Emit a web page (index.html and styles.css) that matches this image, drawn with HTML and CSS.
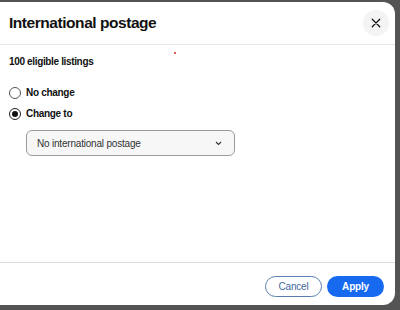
FILE: index.html
```html
<!DOCTYPE html>
<html lang="en">
<head>
    <meta charset="UTF-8">
    <title>International postage</title>
    <link rel="stylesheet" href="styles.css">
</head>
<body>
    <div class="dialog">
        <div class="dialog-header">
            <h1 class="title">International postage</h1>
            <button class="close" aria-label="Close">
                <svg width="10" height="10" viewBox="0 0 12 12">
                    <path d="M1.5 1.5 L10.5 10.5 M10.5 1.5 L1.5 10.5" stroke="#111" stroke-width="1.5" stroke-linecap="round"/>
                </svg>
            </button>
        </div>
        <div class="dialog-body">
            <p class="count">100 eligible listings<span class="dot"></span></p>
            <label class="option">
                <span class="radio"></span>
                No change
            </label>
            <label class="option">
                <span class="radio checked"></span>
                Change to
            </label>
            <div class="select">
                <span>No international postage</span>
                <svg width="7" height="5" viewBox="0 0 7 5">
                    <path d="M1 1 L3.5 3.5 L6 1" fill="none" stroke="#333" stroke-width="1.1"/>
                </svg>
            </div>
        </div>
        <div class="dialog-footer">
            <button class="btn btn-secondary">Cancel</button>
            <button class="btn btn-primary">Apply</button>
        </div>
    </div>
</body>
</html>
```

FILE: styles.css
```css
body {
    margin: 0;
    padding: 0;
    background-color: #545454;
    font-family: 'Liberation Sans', Arial, sans-serif;
    color: #111;
}

.dialog {
    width: 395px;
    height: 303px;
    margin-top: 2px;
    background: #ffffff;
    border-radius: 0 12px 12px 0;
    display: flex;
    flex-direction: column;
}

.dialog-header {
    height: 42px;
    display: flex;
    align-items: center;
    justify-content: space-between;
    padding: 0 6px 0 9px;
    border-bottom: 1px solid #e6e6e6;
}

.title {
    margin: 0;
    font-size: 15.5px;
    font-weight: 700;
    letter-spacing: -0.45px;
}

.close {
    width: 26px;
    height: 26px;
    border: none;
    border-radius: 50%;
    background: #f4f4f4;
    display: flex;
    align-items: center;
    justify-content: center;
    padding: 0;
}

.dialog-body {
    flex: 1;
    padding: 11px 9px 0 9px;
}

.count {
    position: relative;
    margin: 0 0 15px 0;
    font-size: 10px;
    font-weight: 700;
    letter-spacing: -0.35px;
}

.dot {
    position: absolute;
    left: 165px;
    top: -4px;
    width: 2px;
    height: 2px;
    border-radius: 50%;
    background: #d22;
}

.option {
    display: flex;
    align-items: center;
    gap: 5px;
    height: 21px;
    font-size: 10px;
    font-weight: 700;
    letter-spacing: -0.3px;
}

.radio {
    width: 10px;
    height: 10px;
    border: 1px solid #555;
    border-radius: 50%;
    display: flex;
    align-items: center;
    justify-content: center;
}

.radio.checked {
    border-color: #222;
}

.radio.checked::after {
    content: "";
    width: 6px;
    height: 6px;
    border-radius: 50%;
    background: #111;
}

.select {
    width: 209px;
    height: 26px;
    margin: 6px 0 0 17px;
    border: 1px solid #9a9a9a;
    border-radius: 6px;
    background: #f7f7f7;
    display: flex;
    align-items: center;
    justify-content: space-between;
    padding: 0 12px 0 10px;
    box-sizing: border-box;
    font-size: 10px;
    color: #333;
    letter-spacing: -0.2px;
}

.dialog-footer {
    border-top: 1px solid #dcdcdc;
    display: flex;
    justify-content: flex-end;
    gap: 5px;
    padding: 13px 11px 8px 0;
}

.btn {
    width: 57px;
    height: 21px;
    border-radius: 11px;
    font-family: 'Liberation Sans', Arial, sans-serif;
    font-size: 10px;
    padding: 0;
    letter-spacing: -0.2px;
}

.btn-secondary {
    background: #ffffff;
    border: 1px solid #5a7fae;
    color: #3f679c;
}

.btn-primary {
    background: #1769ef;
    border: none;
    color: #ffffff;
    font-weight: 700;
}
```
